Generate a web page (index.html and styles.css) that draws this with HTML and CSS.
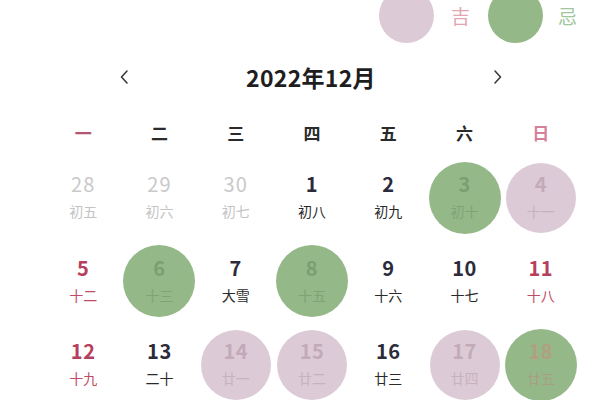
FILE: index.html
```html
<!DOCTYPE html>
<html lang="zh">
<head>
<meta charset="utf-8">
<link rel="stylesheet" href="styles.css">
</head>
<body>
<div class="page">
  <div class="legend">
    <span class="dot dot-ji"></span><span class="legend-label label-ji">吉</span>
    <span class="dot dot-yi"></span><span class="legend-label label-yi">忌</span>
  </div>
  <div class="nav">
    <svg class="chev" width="10" height="16" viewBox="0 0 10 16"><path d="M8 2 L2.5 8 L8 14" fill="none" stroke="#3a3a3a" stroke-width="1.6" stroke-linecap="round" stroke-linejoin="round"/></svg>
    <div class="title">2022年12月</div>
    <svg class="chev" width="10" height="16" viewBox="0 0 10 16"><path d="M2 2 L7.5 8 L2 14" fill="none" stroke="#3a3a3a" stroke-width="1.6" stroke-linecap="round" stroke-linejoin="round"/></svg>
  </div>
  <div class="weekdays">
    <div class="wd wd-mon">一</div>
    <div class="wd">二</div>
    <div class="wd">三</div>
    <div class="wd">四</div>
    <div class="wd">五</div>
    <div class="wd">六</div>
    <div class="wd wd-sun">日</div>
  </div>
  <div class="days">
    <div class="cell"><div class="day muted"><span class="num">28</span><span class="lunar">初五</span></div></div>
    <div class="cell"><div class="day muted"><span class="num">29</span><span class="lunar">初六</span></div></div>
    <div class="cell"><div class="day muted"><span class="num">30</span><span class="lunar">初七</span></div></div>
    <div class="cell"><div class="day"><span class="num">1</span><span class="lunar">初八</span></div></div>
    <div class="cell"><div class="day"><span class="num">2</span><span class="lunar">初九</span></div></div>
    <div class="cell"><div class="day green"><span class="num">3</span><span class="lunar">初十</span></div></div>
    <div class="cell"><div class="day pink"><span class="num">4</span><span class="lunar">十一</span></div></div>

    <div class="cell"><div class="day red"><span class="num">5</span><span class="lunar">十二</span></div></div>
    <div class="cell"><div class="day green"><span class="num">6</span><span class="lunar">十三</span></div></div>
    <div class="cell"><div class="day"><span class="num">7</span><span class="lunar">大雪</span></div></div>
    <div class="cell"><div class="day green"><span class="num">8</span><span class="lunar">十五</span></div></div>
    <div class="cell"><div class="day"><span class="num">9</span><span class="lunar">十六</span></div></div>
    <div class="cell"><div class="day"><span class="num">10</span><span class="lunar">十七</span></div></div>
    <div class="cell"><div class="day red"><span class="num">11</span><span class="lunar">十八</span></div></div>

    <div class="cell"><div class="day red"><span class="num">12</span><span class="lunar">十九</span></div></div>
    <div class="cell"><div class="day"><span class="num">13</span><span class="lunar">二十</span></div></div>
    <div class="cell"><div class="day pink"><span class="num">14</span><span class="lunar">廿一</span></div></div>
    <div class="cell"><div class="day pink"><span class="num">15</span><span class="lunar">廿二</span></div></div>
    <div class="cell"><div class="day"><span class="num">16</span><span class="lunar">廿三</span></div></div>
    <div class="cell"><div class="day pink"><span class="num">17</span><span class="lunar">廿四</span></div></div>
    <div class="cell"><div class="day green sunday"><span class="num">18</span><span class="lunar">廿五</span></div></div>
  </div>
</div>
</body>
</html>
```

FILE: styles.css
```css
html, body {
  margin: 0;
  padding: 0;
  background: #ffffff;
}
body {
  width: 600px;
  height: 400px;
  overflow: hidden;
  font-family: "Noto Sans CJK SC", "Noto Sans", sans-serif;
  color: #2a2a35;
}
.page {
  display: flex;
  flex-direction: column;
}
.legend {
  display: flex;
  justify-content: flex-end;
  align-items: center;
  height: 56px;
  margin-top: -13px;
  padding-right: 23px;
}
.dot {
  width: 55px;
  height: 55px;
  border-radius: 50%;
}
.dot-ji { background: #dccbd6; }
.dot-yi { background: #95b888; margin-left: 18px; }
.legend-label {
  font-size: 19px;
  line-height: 24px;
  margin-left: 17px;
  margin-top: 2px;
}
.label-ji { color: #e3a6b1; }
.label-yi { color: #9fc69c; margin-left: 15px; }

.nav {
  display: flex;
  justify-content: space-between;
  align-items: center;
  height: 30px;
  margin-top: 19px;
  margin-left: 119px;
  width: 384px;
}
.chev { display: block; }
.title {
  font-size: 23px;
  font-weight: 700;
  line-height: 30px;
  letter-spacing: 0.3px;
  color: #1e1e1e;
}

.weekdays {
  display: grid;
  grid-template-columns: repeat(7, 1fr);
  margin-top: 26px;
  margin-left: 45px;
  width: 534px;
  height: 30px;
  align-items: center;
}
.wd {
  text-align: center;
  font-size: 17px;
  font-weight: 700;
  line-height: 30px;
  color: #2a2a2a;
}
.wd-mon { color: #b65675; }
.wd-sun { color: #d4809a; }

.days {
  display: grid;
  grid-template-columns: repeat(7, 1fr);
  grid-auto-rows: 83.5px;
  margin-top: 8px;
  margin-left: 45px;
  width: 534px;
}
.cell {
  display: flex;
  align-items: center;
  justify-content: center;
}
.day {
  width: 72px;
  height: 72px;
  border-radius: 50%;
  display: flex;
  flex-direction: column;
  align-items: center;
  justify-content: center;
  padding-bottom: 2px;
  box-sizing: border-box;
}
.num {
  font-size: 20px;
  font-weight: 700;
  line-height: 26px;
  margin-bottom: 3px;
  letter-spacing: 0.5px;
  color: #2b2b3a;
}
.lunar {
  font-size: 14px;
  line-height: 22px;
  color: #2a2a2a;
}
.muted .num { color: #c9c9c9; font-weight: 400; letter-spacing: 1px; }
.muted .lunar { color: #c4c4c4; }
.red .num { color: #b63f5e; }
.red .lunar { color: #bf4b67; }
.green { background: #95b888; }
.green .num { color: #7b9f70; }
.green .lunar { color: #7fa474; }
.pink { background: #dccbd6; width: 70px; height: 70px; }
.pink .num { color: #c3aab9; }
.pink .lunar { color: #c7b2bf; }
.green.sunday .num { color: #b0a080; }
.green.sunday .lunar { color: #aa9e80; }
```
